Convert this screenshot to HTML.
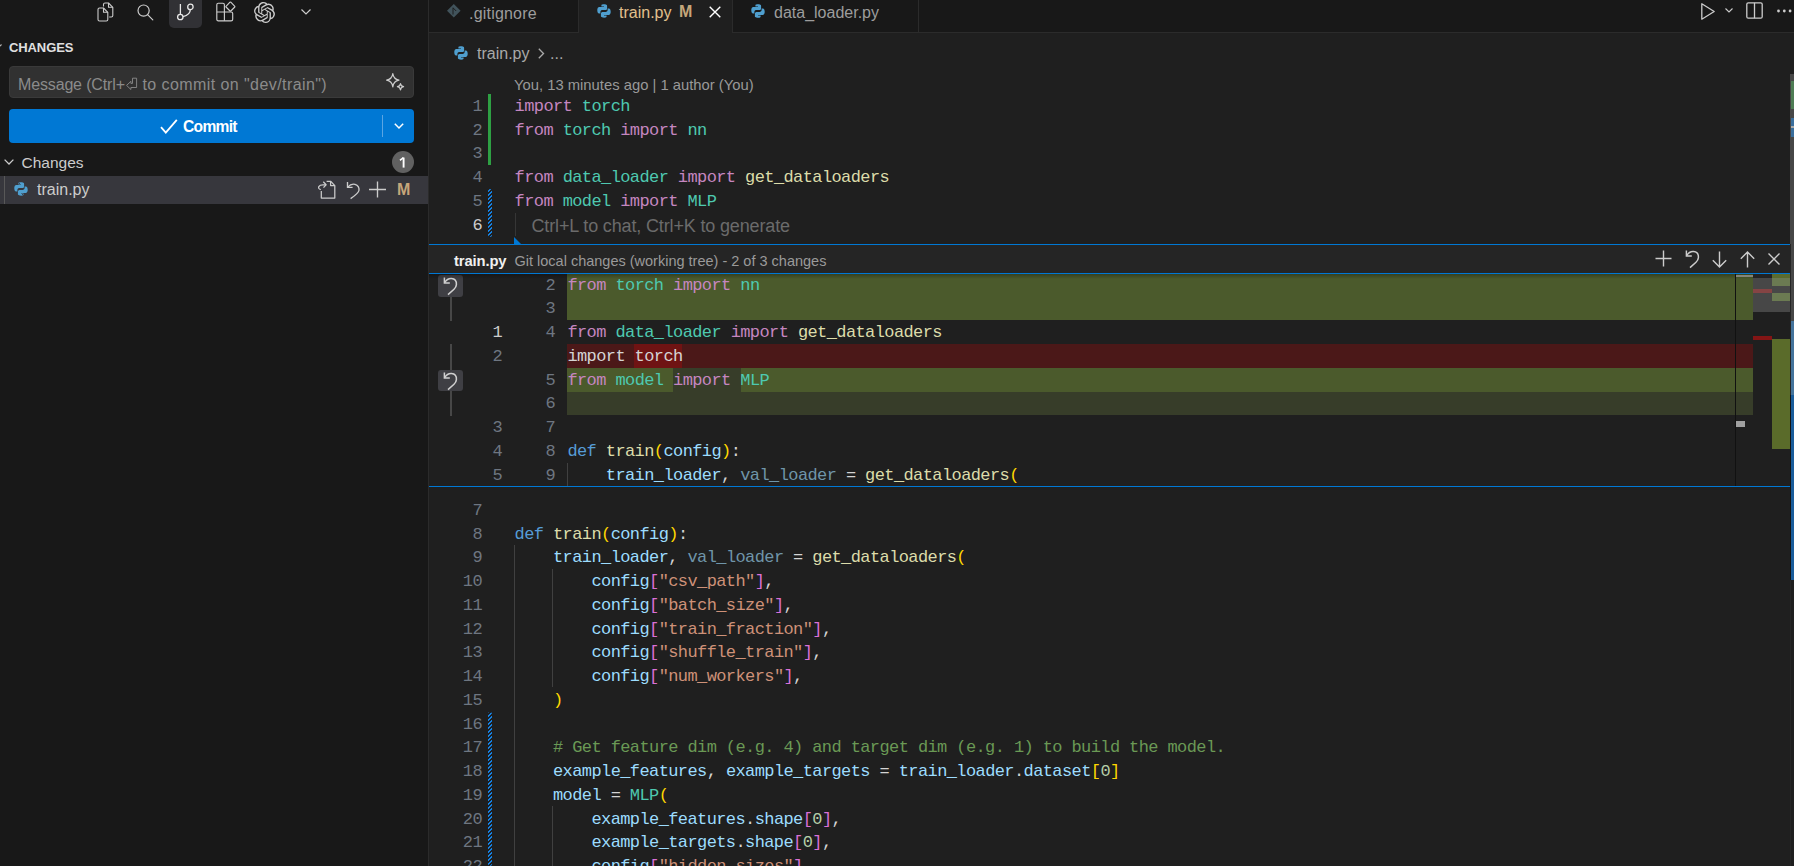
<!DOCTYPE html>
<html><head><meta charset="utf-8">
<style>
*{margin:0;padding:0;box-sizing:border-box}
html,body{width:1794px;height:866px;overflow:hidden;background:#1f1f1f;font-family:"Liberation Sans",sans-serif}
.abs{position:absolute}
#side{position:absolute;left:0;top:0;width:428px;height:866px;background:#181818}
#sideborder{position:absolute;left:428px;top:0;width:1px;height:866px;background:#2b2b2b}
svg{position:absolute;overflow:visible}
.cl{position:absolute;font-family:"Liberation Mono",monospace;font-size:17px;letter-spacing:-0.6px;line-height:23.75px;white-space:pre;color:#d4d4d4;height:23.75px}
.ln{position:absolute;width:40px;text-align:right;font-family:"Liberation Mono",monospace;font-size:17px;letter-spacing:-0.6px;line-height:23.75px;white-space:pre}
.bg{position:absolute;left:567px;width:1186px}
.bgx{position:absolute}
.t{position:absolute;white-space:pre;line-height:1}
</style></head><body>
<!-- ================= SIDEBAR ================= -->
<div id="side"></div>
<div id="sideborder"></div>
<!-- activity icons -->
<div class="abs" style="left:169px;top:0;width:33px;height:28px;background:#313135;border-radius:0 0 5px 5px"></div>
<!-- files -->
<svg style="left:97px;top:2px" width="17" height="20" viewBox="0 0 17 20" fill="none" stroke="#cccccc" stroke-width="1.1" stroke-linejoin="round">
  <path d="M6.5 4.5 V2.5 Q6.5 1 8 1 H11.5 L15.8 5.3 V13.5 Q15.8 15 14.3 15 H12.2"/>
  <path d="M11.5 1 V5.3 H15.8"/>
  <path d="M1 7.5 Q1 6 2.5 6 H6.5 L10.8 10.3 V17.5 Q10.8 19 9.3 19 H2.5 Q1 19 1 17.5 Z"/>
  <path d="M6.5 6 V10.3 H10.8"/>
</svg>
<!-- search -->
<svg style="left:137px;top:4px" width="17" height="17" viewBox="0 0 17 17" fill="none" stroke="#cccccc" stroke-width="1.2">
  <circle cx="6.6" cy="6.6" r="5.6"/>
  <path d="M10.6 10.6 L15.8 15.8" stroke-linecap="round"/>
</svg>
<!-- source control -->
<svg style="left:177px;top:4px" width="18" height="17" viewBox="0 0 18 17" fill="none" stroke="#e8e8e8" stroke-width="1.3">
  <path d="M3.4 0 V10.2"/>
  <circle cx="3.3" cy="13" r="2.7"/>
  <circle cx="13.4" cy="2.9" r="2.7"/>
  <path d="M13.3 5.6 Q13.3 11 6 12.6"/>
</svg>
<!-- extensions -->
<svg style="left:216px;top:1px" width="20" height="21" viewBox="0 0 20 21" fill="none" stroke="#cccccc" stroke-width="1.15" stroke-linejoin="round">
  <path d="M0.8 3.8 Q0.8 2.2 2.3 2.2 H6.9 Q8.4 2.2 8.4 3.8 V11 H15.1 Q16.7 11 16.7 12.5 V18.2 Q16.7 19.8 15.1 19.8 H2.3 Q0.8 19.8 0.8 18.2 Z"/>
  <path d="M0.8 11 H8.4 V19.8"/>
  <path d="M14.4 1 Q14.6 1 14.8 1.2 L18.8 5.3 Q19 5.7 18.8 6 L14.8 10 Q14.4 10.3 14 10 L10 6 Q9.7 5.7 10 5.3 L14 1.2 Q14.2 1 14.4 1 Z"/>
</svg>
<!-- openai -->
<svg style="left:254px;top:1.5px" width="21" height="21" viewBox="0 0 24 24"><path fill="#cccccc" d="M22.2819 9.8211a5.9847 5.9847 0 0 0-.5157-4.9108 6.0462 6.0462 0 0 0-6.5098-2.9A6.0651 6.0651 0 0 0 4.9807 4.1818a5.9847 5.9847 0 0 0-3.9977 2.9 6.0462 6.0462 0 0 0 .7427 7.0966 5.98 5.98 0 0 0 .511 4.9107 6.051 6.051 0 0 0 6.5146 2.9001A5.9847 5.9847 0 0 0 13.2599 24a6.0557 6.0557 0 0 0 5.7718-4.2058 5.9894 5.9894 0 0 0 3.9977-2.9001 6.0557 6.0557 0 0 0-.7475-7.0729zm-9.022 12.6081a4.4755 4.4755 0 0 1-2.8764-1.0408l.1419-.0804 4.7783-2.7582a.7948.7948 0 0 0 .3927-.6813v-6.7369l2.02 1.1686a.071.071 0 0 1 .038.052v5.5826a4.504 4.504 0 0 1-4.4945 4.4944zm-9.6607-4.1254a4.4708 4.4708 0 0 1-.5346-3.0137l.142.0852 4.783 2.7582a.7712.7712 0 0 0 .7806 0l5.8428-3.3685v2.3324a.0804.0804 0 0 1-.0332.0615L9.74 19.9502a4.4992 4.4992 0 0 1-6.1408-1.6464zM2.3408 7.8956a4.485 4.485 0 0 1 2.3655-1.9728V11.6a.7664.7664 0 0 0 .3879.6765l5.8144 3.3543-2.0201 1.1685a.0757.0757 0 0 1-.071 0l-4.8303-2.7865A4.504 4.504 0 0 1 2.3408 7.872zm16.5963 3.8558L13.1038 8.364 15.1192 7.2a.0757.0757 0 0 1 .071 0l4.8303 2.7913a4.4944 4.4944 0 0 1-.6765 8.1042v-5.6772a.79.79 0 0 0-.407-.667zm2.0107-3.0231l-.142-.0852-4.7735-2.7818a.7759.7759 0 0 0-.7854 0L9.409 9.2297V6.8974a.0662.0662 0 0 1 .0284-.0615l4.8303-2.7866a4.4992 4.4992 0 0 1 6.6802 4.66zM8.3065 12.863l-2.02-1.1638a.0804.0804 0 0 1-.038-.0567V6.0742a4.4992 4.4992 0 0 1 7.3757-3.4537l-.142.0805L8.704 5.459a.7948.7948 0 0 0-.3927.6813zm1.0976-2.3654l2.602-1.4998 2.6069 1.4998v2.9994l-2.5974 1.4997-2.6067-1.4997Z"/></svg>
<!-- chevron -->
<svg style="left:301px;top:9px" width="10" height="6" viewBox="0 0 10 6" fill="none" stroke="#cccccc" stroke-width="1.2"><path d="M0.5 0.5 L5 5 L9.5 0.5"/></svg>

<!-- CHANGES header -->
<svg style="left:-7px;top:44px" width="9" height="6" viewBox="0 0 9 6" fill="none" stroke="#bbbbbb" stroke-width="1.1"><path d="M0.5 0.5 L4.5 4.5 L8.5 0.5"/></svg>
<div class="t" style="left:9px;top:41px;font-size:13px;font-weight:bold;color:#e0e0e0;letter-spacing:-0.1px">CHANGES</div>

<!-- message input -->
<div class="abs" style="left:9px;top:66px;width:405px;height:32px;background:#313131;border:1px solid #3a3a3a;border-radius:4px"></div>
<div class="t" style="left:18px;top:76.5px;font-size:16px;color:#8b8b8b;letter-spacing:-0.15px">Message (Ctrl+</div>
<svg style="left:125px;top:76.5px" width="14" height="14" viewBox="0 0 14 14" fill="none" stroke="#8b8b8b" stroke-width="0.9" stroke-linejoin="miter"><path d="M7.5 1.2 H11.6 V10.5 H5.9 V12.5 L1.6 8.4 L5.9 4.3 V6.4 H7.5 Z"/></svg>
<div class="t" style="left:142.5px;top:76.5px;font-size:16px;color:#8b8b8b;letter-spacing:0.42px">to commit on "dev/train")</div>
<!-- sparkle -->
<svg style="left:386px;top:73px" width="19" height="19" viewBox="0 0 19 19" fill="none" stroke="#cccccc" stroke-width="1.2" stroke-linejoin="round">
  <path d="M6.8 0.6 Q7.6 6.2 13 7.2 Q7.6 8.2 6.8 13.8 Q6 8.2 0.6 7.2 Q6 6.2 6.8 0.6 Z"/>
  <path d="M14.5 10.6 Q14.9 13.2 17.6 13.7 Q14.9 14.2 14.5 16.8 Q14.1 14.2 11.4 13.7 Q14.1 13.2 14.5 10.6 Z"/>
</svg>
<!-- commit button -->
<div class="abs" style="left:9px;top:109px;width:405px;height:34px;background:#0078d4;border-radius:4px"></div>
<div class="abs" style="left:382px;top:115px;width:1px;height:22px;background:#5aa5e3"></div>
<svg style="left:160px;top:119px" width="18" height="15" viewBox="0 0 18 15" fill="none" stroke="#ffffff" stroke-width="1.8"><path d="M1 8.2 L5.8 13.6 L16.8 0.8"/></svg>
<div class="t" style="left:183px;top:119.2px;font-size:15.6px;font-weight:bold;color:#ffffff;letter-spacing:-0.7px">Commit</div>
<svg style="left:394px;top:123px" width="10" height="6" viewBox="0 0 10 6" fill="none" stroke="#ffffff" stroke-width="1.5"><path d="M0.8 0.8 L5 5 L9.2 0.8"/></svg>

<!-- Changes group -->
<svg style="left:4px;top:159px" width="10" height="6" viewBox="0 0 10 6" fill="none" stroke="#cccccc" stroke-width="1.3"><path d="M0.6 0.6 L5 5 L9.4 0.6"/></svg>
<div class="t" style="left:21.5px;top:155px;font-size:15.5px;color:#cccccc">Changes</div>
<div class="abs" style="left:392px;top:151px;width:22px;height:22px;border-radius:11px;background:#616161"></div>
<svg style="left:399px;top:156.5px" width="7" height="11" viewBox="0 0 7 11" fill="none" stroke="#ffffff" stroke-width="1.9"><path d="M4.6 0.6 V10.6"/><path d="M0.9 3.2 Q3.2 2 4.4 0.6" stroke-width="1.6"/></svg>

<!-- train.py row -->
<div class="abs" style="left:0;top:176px;width:428px;height:28px;background:#37373d"></div>
<div class="abs" style="left:4px;top:176px;width:1px;height:28px;background:#585858"></div>
<svg style="left:14px;top:182px" width="14" height="14" viewBox="0 0 14 14">
  <path fill="#4f9fcf" d="M6.8 0.3 C4.2 0.3 4.4 1.4 4.4 1.4 V2.6 H7 V3.1 H2.5 C2.5 3.1 0.3 2.9 0.3 6.3 C0.3 9.7 2.2 9.6 2.2 9.6 H3.4 V8 C3.4 8 3.3 6.1 5.3 6.1 H8.3 C8.3 6.1 10.1 6.1 10.1 4.4 V1.9 C10.1 1.9 10.4 0.3 6.8 0.3 Z M5.4 1 A0.55 0.55 0 1 1 5.4 2.1 A0.55 0.55 0 1 1 5.4 1 Z"/>
  <path fill="#4f9fcf" d="M7.2 13.7 C9.8 13.7 9.6 12.6 9.6 12.6 V11.4 H7 V10.9 H11.5 C11.5 10.9 13.7 11.1 13.7 7.7 C13.7 4.3 11.8 4.4 11.8 4.4 H10.6 V6 C10.6 6 10.7 7.9 8.7 7.9 H5.7 C5.7 7.9 3.9 7.9 3.9 9.6 V12.1 C3.9 12.1 3.6 13.7 7.2 13.7 Z M8.6 13 A0.55 0.55 0 1 1 8.6 11.9 A0.55 0.55 0 1 1 8.6 13 Z"/>
</svg>
<div class="t" style="left:37px;top:182px;font-size:16px;color:#cccccc">train.py</div>
<!-- row actions -->
<svg style="left:317px;top:180px" width="20" height="20" viewBox="0 0 20 20" fill="none" stroke="#cccccc" stroke-width="1.25" stroke-linejoin="round">
  <path d="M4.3 11 V18.1 H17.8 V5.6 L13.8 1.4 H9.6"/>
  <path d="M13.6 1.4 V5.6 H17.8"/>
  <path d="M3.8 9.6 Q0.9 8.9 1.8 6.6 Q2.8 4.8 6 4.8 H9"/><path d="M6.3 1.8 L9.1 4.8 L6.5 7.6"/>
</svg>
<svg style="left:346px;top:181px" width="15" height="19" viewBox="0 0 15 19" fill="none" stroke="#cccccc" stroke-width="1.35">
  <path d="M1.5 1 V6.3 H6.6"/><path d="M1.8 6.1 Q5 2.3 9 3.3 Q13.5 4.8 13 9.3 Q12.6 12.3 4.6 17.6"/>
</svg>
<svg style="left:369px;top:180.5px" width="17" height="17" viewBox="0 0 17 17" fill="none" stroke="#cccccc" stroke-width="1.35"><path d="M8.5 0.5 V16.5 M0 8.5 H17"/></svg>
<div class="t" style="left:397px;top:182px;font-size:16px;font-weight:bold;color:#c5a67a">M</div>

<!-- ================= EDITOR ================= -->
<!-- tab bar -->
<div class="abs" style="left:429px;top:0;width:1365px;height:33px;background:#181818"></div>
<div class="abs" style="left:429px;top:32px;width:1365px;height:1px;background:#2b2b2b"></div>
<div class="abs" style="left:578px;top:0;width:1px;height:33px;background:#2b2b2b"></div>
<div class="abs" style="left:579px;top:0;width:153px;height:33px;background:#1f1f1f"></div>
<div class="abs" style="left:732px;top:0;width:1px;height:33px;background:#2b2b2b"></div>
<div class="abs" style="left:918px;top:0;width:1px;height:32px;background:#2b2b2b"></div>
<!-- gitignore tab -->
<svg style="left:446.5px;top:4.3px" width="14" height="14" viewBox="0 0 14 14"><path fill="#41535b" d="M6.8 0 L13.6 6.8 L6.8 13.6 L0 6.8 Z"/><path d="M6 3.6 V10.5 M6.2 4 L9.2 7" stroke="#181818" stroke-width="0.9"/></svg>
<div class="t" style="left:469px;top:5.6px;font-size:16px;color:#9d9d9d;letter-spacing:0.2px">.gitignore</div>
<!-- train.py tab -->
<svg style="left:597px;top:4px" width="14" height="14" viewBox="0 0 14 14">
  <path fill="#4f9fcf" d="M6.8 0.3 C4.2 0.3 4.4 1.4 4.4 1.4 V2.6 H7 V3.1 H2.5 C2.5 3.1 0.3 2.9 0.3 6.3 C0.3 9.7 2.2 9.6 2.2 9.6 H3.4 V8 C3.4 8 3.3 6.1 5.3 6.1 H8.3 C8.3 6.1 10.1 6.1 10.1 4.4 V1.9 C10.1 1.9 10.4 0.3 6.8 0.3 Z"/>
  <path fill="#4f9fcf" d="M7.2 13.7 C9.8 13.7 9.6 12.6 9.6 12.6 V11.4 H7 V10.9 H11.5 C11.5 10.9 13.7 11.1 13.7 7.7 C13.7 4.3 11.8 4.4 11.8 4.4 H10.6 V6 C10.6 6 10.7 7.9 8.7 7.9 H5.7 C5.7 7.9 3.9 7.9 3.9 9.6 V12.1 C3.9 12.1 3.6 13.7 7.2 13.7 Z"/>
</svg>
<div class="t" style="left:619px;top:5px;font-size:16px;color:#e2c08d">train.py</div>
<div class="t" style="left:679px;top:4px;font-size:16px;font-weight:bold;color:#c5a67a">M</div>
<svg style="left:709px;top:6px" width="12" height="12" viewBox="0 0 12 12" fill="none" stroke="#ffffff" stroke-width="1.4"><path d="M0.7 0.7 L11.3 11.3 M11.3 0.7 L0.7 11.3"/></svg>
<!-- data_loader tab -->
<svg style="left:751px;top:4px" width="14" height="14" viewBox="0 0 14 14">
  <path fill="#4f9fcf" d="M6.8 0.3 C4.2 0.3 4.4 1.4 4.4 1.4 V2.6 H7 V3.1 H2.5 C2.5 3.1 0.3 2.9 0.3 6.3 C0.3 9.7 2.2 9.6 2.2 9.6 H3.4 V8 C3.4 8 3.3 6.1 5.3 6.1 H8.3 C8.3 6.1 10.1 6.1 10.1 4.4 V1.9 C10.1 1.9 10.4 0.3 6.8 0.3 Z"/>
  <path fill="#4f9fcf" d="M7.2 13.7 C9.8 13.7 9.6 12.6 9.6 12.6 V11.4 H7 V10.9 H11.5 C11.5 10.9 13.7 11.1 13.7 7.7 C13.7 4.3 11.8 4.4 11.8 4.4 H10.6 V6 C10.6 6 10.7 7.9 8.7 7.9 H5.7 C5.7 7.9 3.9 7.9 3.9 9.6 V12.1 C3.9 12.1 3.6 13.7 7.2 13.7 Z"/>
</svg>
<div class="t" style="left:774px;top:5px;font-size:16px;color:#9d9d9d">data_loader.py</div>
<!-- top right actions -->
<svg style="left:1701px;top:3px" width="14" height="17" viewBox="0 0 14 17" fill="none" stroke="#cccccc" stroke-width="1.3" stroke-linejoin="round"><path d="M0.8 0.8 V16.2 L13.2 8.5 Z"/></svg>
<svg style="left:1725px;top:8px" width="8" height="5" viewBox="0 0 8 5" fill="none" stroke="#cccccc" stroke-width="1.1"><path d="M0.5 0.5 L4 4 L7.5 0.5"/></svg>
<svg style="left:1746px;top:2px" width="17" height="17" viewBox="0 0 17 17" fill="none" stroke="#cccccc" stroke-width="1.3"><rect x="0.8" y="0.8" width="15.4" height="15.4" rx="1.5"/><path d="M8.5 0.8 V16.2"/></svg>
<svg style="left:1777px;top:9px" width="15" height="4" viewBox="0 0 15 4" fill="#cccccc"><circle cx="1.5" cy="2" r="1.4"/><circle cx="7.3" cy="2" r="1.4"/><circle cx="13.1" cy="2" r="1.4"/></svg>

<!-- breadcrumb -->
<svg style="left:454px;top:46px" width="14" height="14" viewBox="0 0 14 14">
  <path fill="#4f9fcf" d="M6.8 0.3 C4.2 0.3 4.4 1.4 4.4 1.4 V2.6 H7 V3.1 H2.5 C2.5 3.1 0.3 2.9 0.3 6.3 C0.3 9.7 2.2 9.6 2.2 9.6 H3.4 V8 C3.4 8 3.3 6.1 5.3 6.1 H8.3 C8.3 6.1 10.1 6.1 10.1 4.4 V1.9 C10.1 1.9 10.4 0.3 6.8 0.3 Z"/>
  <path fill="#4f9fcf" d="M7.2 13.7 C9.8 13.7 9.6 12.6 9.6 12.6 V11.4 H7 V10.9 H11.5 C11.5 10.9 13.7 11.1 13.7 7.7 C13.7 4.3 11.8 4.4 11.8 4.4 H10.6 V6 C10.6 6 10.7 7.9 8.7 7.9 H5.7 C5.7 7.9 3.9 7.9 3.9 9.6 V12.1 C3.9 12.1 3.6 13.7 7.2 13.7 Z"/>
</svg>
<div class="t" style="left:477px;top:46px;font-size:16px;color:#a9a9a9">train.py</div>
<svg style="left:537.5px;top:47.5px" width="7" height="11" viewBox="0 0 7 11" fill="none" stroke="#a9a9a9" stroke-width="1.35"><path d="M0.8 0.8 L5.5 5.5 L0.8 10.2"/></svg>
<div class="t" style="left:550px;top:46px;font-size:16px;color:#a9a9a9">...</div>

<!-- blame -->
<div class="t" style="left:514px;top:78px;font-size:14.8px;color:#999999">You, 13 minutes ago | 1 author (You)</div>

<!-- gutter bars -->
<div class="abs" style="left:488px;top:94px;width:3px;height:71px;background:#2ea043"></div>
<div class="abs" style="left:488px;top:189px;width:4px;height:48px;background:repeating-linear-gradient(-45deg,#1580e0 0 1.75px,transparent 1.75px 2.83px);border-radius:2px"></div>
<div class="abs" style="left:488px;top:712px;width:4px;height:154px;background:repeating-linear-gradient(-45deg,#1580e0 0 1.75px,transparent 1.75px 2.83px);border-radius:2px"></div>

<!-- hint line 6 -->
<div class="abs" style="left:515px;top:213px;width:1px;height:23px;background:#363636"></div>
<div class="t" style="left:531.5px;top:216.8px;font-size:18px;color:#6b6b6b;letter-spacing:-0.15px">Ctrl+L to chat, Ctrl+K to generate</div>

<!-- indent guides bottom -->
<div class="abs" style="left:514px;top:545px;width:1px;height:321px;background:#404040"></div>
<div class="abs" style="left:552px;top:569px;width:1px;height:118px;background:#404040"></div>
<div class="abs" style="left:552px;top:806px;width:1px;height:60px;background:#404040"></div>

<div class="ln" style="top:94.90px;left:442px;color:#6e7681">1</div>
<div class="cl" style="top:94.90px;left:514.6px"><span style="color:#c586c0">import</span> <span style="color:#4ec9b0">torch</span></div>
<div class="ln" style="top:118.65px;left:442px;color:#6e7681">2</div>
<div class="cl" style="top:118.65px;left:514.6px"><span style="color:#c586c0">from</span> <span style="color:#4ec9b0">torch</span> <span style="color:#c586c0">import</span> <span style="color:#4ec9b0">nn</span></div>
<div class="ln" style="top:142.40px;left:442px;color:#6e7681">3</div>
<div class="cl" style="top:142.40px;left:514.6px"></div>
<div class="ln" style="top:166.15px;left:442px;color:#6e7681">4</div>
<div class="cl" style="top:166.15px;left:514.6px"><span style="color:#c586c0">from</span> <span style="color:#4ec9b0">data_loader</span> <span style="color:#c586c0">import</span> <span style="color:#dcdcaa">get_dataloaders</span></div>
<div class="ln" style="top:189.90px;left:442px;color:#6e7681">5</div>
<div class="cl" style="top:189.90px;left:514.6px"><span style="color:#c586c0">from</span> <span style="color:#4ec9b0">model</span> <span style="color:#c586c0">import</span> <span style="color:#4ec9b0">MLP</span></div>
<div class="ln" style="top:213.65px;left:442px;color:#cccccc">6</div>
<div class="ln" style="top:498.95px;left:442px;color:#6e7681">7</div>
<div class="cl" style="top:498.95px;left:514.6px"></div>
<div class="ln" style="top:522.70px;left:442px;color:#6e7681">8</div>
<div class="cl" style="top:522.70px;left:514.6px"><span style="color:#569cd6">def</span> <span style="color:#dcdcaa">train</span><span style="color:#ffd700">(</span><span style="color:#9cdcfe">config</span><span style="color:#ffd700">)</span><span style="color:#d4d4d4">:</span></div>
<div class="ln" style="top:546.45px;left:442px;color:#6e7681">9</div>
<div class="cl" style="top:546.45px;left:514.6px">    <span style="color:#9cdcfe">train_loader</span><span style="color:#d4d4d4">, </span><span style="color:#6f95a9">val_loader</span><span style="color:#d4d4d4"> = </span><span style="color:#dcdcaa">get_dataloaders</span><span style="color:#ffd700">(</span></div>
<div class="ln" style="top:570.20px;left:442px;color:#6e7681">10</div>
<div class="cl" style="top:570.20px;left:514.6px">        <span style="color:#9cdcfe">config</span><span style="color:#da70d6">[</span><span style="color:#ce9178">"csv_path"</span><span style="color:#da70d6">]</span><span style="color:#d4d4d4">,</span></div>
<div class="ln" style="top:593.95px;left:442px;color:#6e7681">11</div>
<div class="cl" style="top:593.95px;left:514.6px">        <span style="color:#9cdcfe">config</span><span style="color:#da70d6">[</span><span style="color:#ce9178">"batch_size"</span><span style="color:#da70d6">]</span><span style="color:#d4d4d4">,</span></div>
<div class="ln" style="top:617.70px;left:442px;color:#6e7681">12</div>
<div class="cl" style="top:617.70px;left:514.6px">        <span style="color:#9cdcfe">config</span><span style="color:#da70d6">[</span><span style="color:#ce9178">"train_fraction"</span><span style="color:#da70d6">]</span><span style="color:#d4d4d4">,</span></div>
<div class="ln" style="top:641.45px;left:442px;color:#6e7681">13</div>
<div class="cl" style="top:641.45px;left:514.6px">        <span style="color:#9cdcfe">config</span><span style="color:#da70d6">[</span><span style="color:#ce9178">"shuffle_train"</span><span style="color:#da70d6">]</span><span style="color:#d4d4d4">,</span></div>
<div class="ln" style="top:665.20px;left:442px;color:#6e7681">14</div>
<div class="cl" style="top:665.20px;left:514.6px">        <span style="color:#9cdcfe">config</span><span style="color:#da70d6">[</span><span style="color:#ce9178">"num_workers"</span><span style="color:#da70d6">]</span><span style="color:#d4d4d4">,</span></div>
<div class="ln" style="top:688.95px;left:442px;color:#6e7681">15</div>
<div class="cl" style="top:688.95px;left:514.6px">    <span style="color:#ffd700">)</span></div>
<div class="ln" style="top:712.70px;left:442px;color:#6e7681">16</div>
<div class="cl" style="top:712.70px;left:514.6px"></div>
<div class="ln" style="top:736.45px;left:442px;color:#6e7681">17</div>
<div class="cl" style="top:736.45px;left:514.6px">    <span style="color:#6a9955"># Get feature dim (e.g. 4) and target dim (e.g. 1) to build the model.</span></div>
<div class="ln" style="top:760.20px;left:442px;color:#6e7681">18</div>
<div class="cl" style="top:760.20px;left:514.6px">    <span style="color:#9cdcfe">example_features</span><span style="color:#d4d4d4">, </span><span style="color:#9cdcfe">example_targets</span><span style="color:#d4d4d4"> = </span><span style="color:#9cdcfe">train_loader</span><span style="color:#d4d4d4">.</span><span style="color:#9cdcfe">dataset</span><span style="color:#ffd700">[</span><span style="color:#b5cea8">0</span><span style="color:#ffd700">]</span></div>
<div class="ln" style="top:783.95px;left:442px;color:#6e7681">19</div>
<div class="cl" style="top:783.95px;left:514.6px">    <span style="color:#9cdcfe">model</span><span style="color:#d4d4d4"> = </span><span style="color:#4ec9b0">MLP</span><span style="color:#ffd700">(</span></div>
<div class="ln" style="top:807.70px;left:442px;color:#6e7681">20</div>
<div class="cl" style="top:807.70px;left:514.6px">        <span style="color:#9cdcfe">example_features</span><span style="color:#d4d4d4">.</span><span style="color:#9cdcfe">shape</span><span style="color:#da70d6">[</span><span style="color:#b5cea8">0</span><span style="color:#da70d6">]</span><span style="color:#d4d4d4">,</span></div>
<div class="ln" style="top:831.45px;left:442px;color:#6e7681">21</div>
<div class="cl" style="top:831.45px;left:514.6px">        <span style="color:#9cdcfe">example_targets</span><span style="color:#d4d4d4">.</span><span style="color:#9cdcfe">shape</span><span style="color:#da70d6">[</span><span style="color:#b5cea8">0</span><span style="color:#da70d6">]</span><span style="color:#d4d4d4">,</span></div>
<div class="ln" style="top:855.20px;left:442px;color:#6e7681">22</div>
<div class="cl" style="top:855.20px;left:514.6px">        <span style="color:#9cdcfe">config</span><span style="color:#da70d6">[</span><span style="color:#ce9178">"hidden_sizes"</span><span style="color:#da70d6">]</span><span style="color:#d4d4d4">,</span></div>

<!-- ================= PEEK ================= -->
<svg style="left:514px;top:237px" width="8" height="8" viewBox="0 0 8 8"><path fill="#0078d4" d="M0 0 V7 H7 Z"/></svg>
<div class="abs" style="left:429px;top:244px;width:1361px;height:1px;background:#0078d4"></div>
<div class="abs" style="left:429px;top:245px;width:1361px;height:28px;background:#252525"></div>
<div class="abs" style="left:429px;top:273px;width:1361px;height:1px;background:#0078d4"></div>
<div class="abs" style="left:429px;top:274px;width:1361px;height:212px;background:#1f1f1f;overflow:hidden"></div>
<div class="abs" style="left:429px;top:486px;width:1361px;height:1px;background:#0078d4"></div>
<div class="t" style="left:454px;top:254px;font-size:14.8px;font-weight:bold;color:#f0f0f0;letter-spacing:-0.12px">train.py</div>
<div class="t" style="left:514.5px;top:254px;font-size:14.5px;color:#9a9a9a">Git local changes (working tree) - 2 of 3 changes</div>
<!-- peek actions -->
<svg style="left:1655px;top:250px" width="17" height="17" viewBox="0 0 17 17" fill="none" stroke="#cccccc" stroke-width="1.4"><path d="M8.5 0.5 V16.5 M0.5 8.5 H16.5"/></svg>
<svg style="left:1684.5px;top:250px" width="15" height="19" viewBox="0 0 15 19" fill="none" stroke="#cccccc" stroke-width="1.45"><path d="M1.4 0.6 V5.9 H6.8"/><path d="M1.7 5.6 C3.5 2.6 6 1.3 8.5 1.5 C11.5 1.7 13.6 4 13.4 7.6 C13.3 9.5 12.5 10.8 11 12.2 L5 17.6"/></svg>
<svg style="left:1712px;top:251px" width="15" height="17" viewBox="0 0 15 17" fill="none" stroke="#cccccc" stroke-width="1.4"><path d="M7.5 0.5 V16 M0.8 9.3 L7.5 16 L14.2 9.3"/></svg>
<svg style="left:1740px;top:251px" width="15" height="17" viewBox="0 0 15 17" fill="none" stroke="#cccccc" stroke-width="1.4"><path d="M7.5 16.5 V1 M0.8 7.7 L7.5 1 L14.2 7.7"/></svg>
<svg style="left:1768px;top:253px" width="12" height="12" viewBox="0 0 12 12" fill="none" stroke="#cccccc" stroke-width="1.4"><path d="M0.5 0.5 L11.5 11.5 M11.5 0.5 L0.5 11.5"/></svg>

<div class="abs" style="left:429px;top:274px;width:1361px;height:212px;overflow:hidden">
<div class="abs" style="left:-429px;top:-274px;width:1794px;height:866px">
<div class="bg" style="top:274px;height:23px;background:#4b5a2c"></div>
<div class="bg" style="top:297px;height:23px;background:#4b5a2c"></div>
<div class="bg" style="top:344px;height:24px;background:#4b1818"></div>
<div class="bgx" style="top:344px;height:24px;left:634px;width:48px;background:#6f1313"></div>
<div class="bg" style="top:368px;height:24px;background:#373d29"></div>
<div class="bgx" style="top:368px;height:24px;left:567px;width:106px;background:#4b5a2c"></div>
<div class="bgx" style="top:368px;height:24px;left:741px;width:1012px;background:#4b5a2c"></div>
<div class="bg" style="top:392px;height:23px;background:#373d29"></div>
<div class="ln" style="top:273.60px;left:515px;color:#6e7681">2</div>
<div class="cl" style="top:273.60px;left:567.4px"><span style="color:#c586c0">from</span> <span style="color:#4ec9b0">torch</span> <span style="color:#c586c0">import</span> <span style="color:#4ec9b0">nn</span></div>
<div class="ln" style="top:297.35px;left:515px;color:#6e7681">3</div>
<div class="cl" style="top:297.35px;left:567.4px"></div>
<div class="ln" style="top:321.10px;left:462px;color:#cccccc">1</div>
<div class="ln" style="top:321.10px;left:515px;color:#6e7681">4</div>
<div class="cl" style="top:321.10px;left:567.4px"><span style="color:#c586c0">from</span> <span style="color:#4ec9b0">data_loader</span> <span style="color:#c586c0">import</span> <span style="color:#dcdcaa">get_dataloaders</span></div>
<div class="ln" style="top:344.85px;left:462px;color:#6e7681">2</div>
<div class="cl" style="top:344.85px;left:567.4px"><span style="color:#d4d4d4">import torch</span></div>
<div class="ln" style="top:368.60px;left:515px;color:#6e7681">5</div>
<div class="cl" style="top:368.60px;left:567.4px"><span style="color:#c586c0">from</span> <span style="color:#4ec9b0">model</span> <span style="color:#c586c0">import</span> <span style="color:#4ec9b0">MLP</span></div>
<div class="ln" style="top:392.35px;left:515px;color:#6e7681">6</div>
<div class="cl" style="top:392.35px;left:567.4px"></div>
<div class="ln" style="top:416.10px;left:462px;color:#6e7681">3</div>
<div class="ln" style="top:416.10px;left:515px;color:#6e7681">7</div>
<div class="cl" style="top:416.10px;left:567.4px"></div>
<div class="ln" style="top:439.85px;left:462px;color:#6e7681">4</div>
<div class="ln" style="top:439.85px;left:515px;color:#6e7681">8</div>
<div class="cl" style="top:439.85px;left:567.4px"><span style="color:#569cd6">def</span> <span style="color:#dcdcaa">train</span><span style="color:#ffd700">(</span><span style="color:#9cdcfe">config</span><span style="color:#ffd700">)</span><span style="color:#d4d4d4">:</span></div>
<div class="ln" style="top:463.60px;left:462px;color:#6e7681">5</div>
<div class="ln" style="top:463.60px;left:515px;color:#6e7681">9</div>
<div class="cl" style="top:463.60px;left:567.4px">    <span style="color:#9cdcfe">train_loader</span><span style="color:#d4d4d4">, </span><span style="color:#6f95a9">val_loader</span><span style="color:#d4d4d4"> = </span><span style="color:#dcdcaa">get_dataloaders</span><span style="color:#ffd700">(</span></div>
<!-- revert buttons -->
<div class="abs" style="left:438px;top:275px;width:25px;height:22px;background:#3f3f44;border-radius:3px"></div>
<svg style="left:443px;top:277px" width="15" height="19" viewBox="0 0 15 19" fill="none" stroke="#d0d0d0" stroke-width="1.5"><path d="M1.4 0.6 V5.9 H6.8"/><path d="M1.7 5.6 C3.5 2.6 6 1.3 8.5 1.5 C11.5 1.7 13.6 4 13.4 7.6 C13.3 9.5 12.5 10.8 11 12.2 L5 17.6"/></svg>
<div class="abs" style="left:450px;top:297px;width:2px;height:24px;background:#474747"></div>
<div class="abs" style="left:450px;top:344px;width:2px;height:72px;background:#474747"></div>
<div class="abs" style="left:438px;top:370px;width:25px;height:21px;background:#3f3f44;border-radius:3px"></div>
<svg style="left:443px;top:371.5px" width="15" height="19" viewBox="0 0 15 19" fill="none" stroke="#d0d0d0" stroke-width="1.5"><path d="M1.4 0.6 V5.9 H6.8"/><path d="M1.7 5.6 C3.5 2.6 6 1.3 8.5 1.5 C11.5 1.7 13.6 4 13.4 7.6 C13.3 9.5 12.5 10.8 11 12.2 L5 17.6"/></svg>
<div class="abs" style="left:567px;top:463px;width:1px;height:24px;background:#404040"></div>
<div class="abs" style="left:429px;top:274px;width:1361px;height:5px;background:linear-gradient(rgba(0,0,0,0.28),rgba(0,0,0,0))"></div>
<!-- peek ruler/minimap -->
<div class="abs" style="left:1735px;top:274px;width:1px;height:212px;background:#111111"></div>
<div class="abs" style="left:1736px;top:275px;width:17px;height:2px;background:#84857a"></div>
<div class="abs" style="left:1736px;top:421px;width:9px;height:6px;background:#a0a0a0"></div>
<div class="abs" style="left:1753px;top:278px;width:37px;height:34px;background:#474747"></div>
<div class="abs" style="left:1753px;top:274px;width:19px;height:4px;background:#232323"></div>
<div class="abs" style="left:1772px;top:274px;width:18px;height:4px;background:#5b6b2f"></div>
<div class="abs" style="left:1772px;top:278px;width:18px;height:8px;background:#6b7a52"></div>
<div class="abs" style="left:1772px;top:293px;width:18px;height:8px;background:#6b7a52"></div>
<div class="abs" style="left:1753px;top:289px;width:19px;height:4px;background:#854444"></div>
<div class="abs" style="left:1753px;top:336px;width:19px;height:4px;background:#841515"></div>
<div class="abs" style="left:1772px;top:339px;width:18px;height:110px;background:#5a6b2a"></div>
</div></div>

<!-- main scrollbar -->
<div class="abs" style="left:1790px;top:74px;width:4px;height:247px;background:#474747"></div>
<div class="abs" style="left:1790px;top:244px;width:1px;height:622px;background:#262626"></div>
<div class="abs" style="left:1790px;top:395px;width:1px;height:185px;background:#141414"></div>
<div class="abs" style="left:1791px;top:81px;width:3px;height:28px;background:#4f7d55"></div>
<div class="abs" style="left:1791px;top:118px;width:3px;height:19px;background:#3a6e9c"></div>
<div class="abs" style="left:1791px;top:126px;width:3px;height:2px;background:#aaaaaa"></div>
<div class="abs" style="left:1791px;top:321px;width:3px;height:74px;background:#44739b"></div>
<div class="abs" style="left:1791px;top:395px;width:3px;height:185px;background:#1a5c9a"></div>
</body></html>
